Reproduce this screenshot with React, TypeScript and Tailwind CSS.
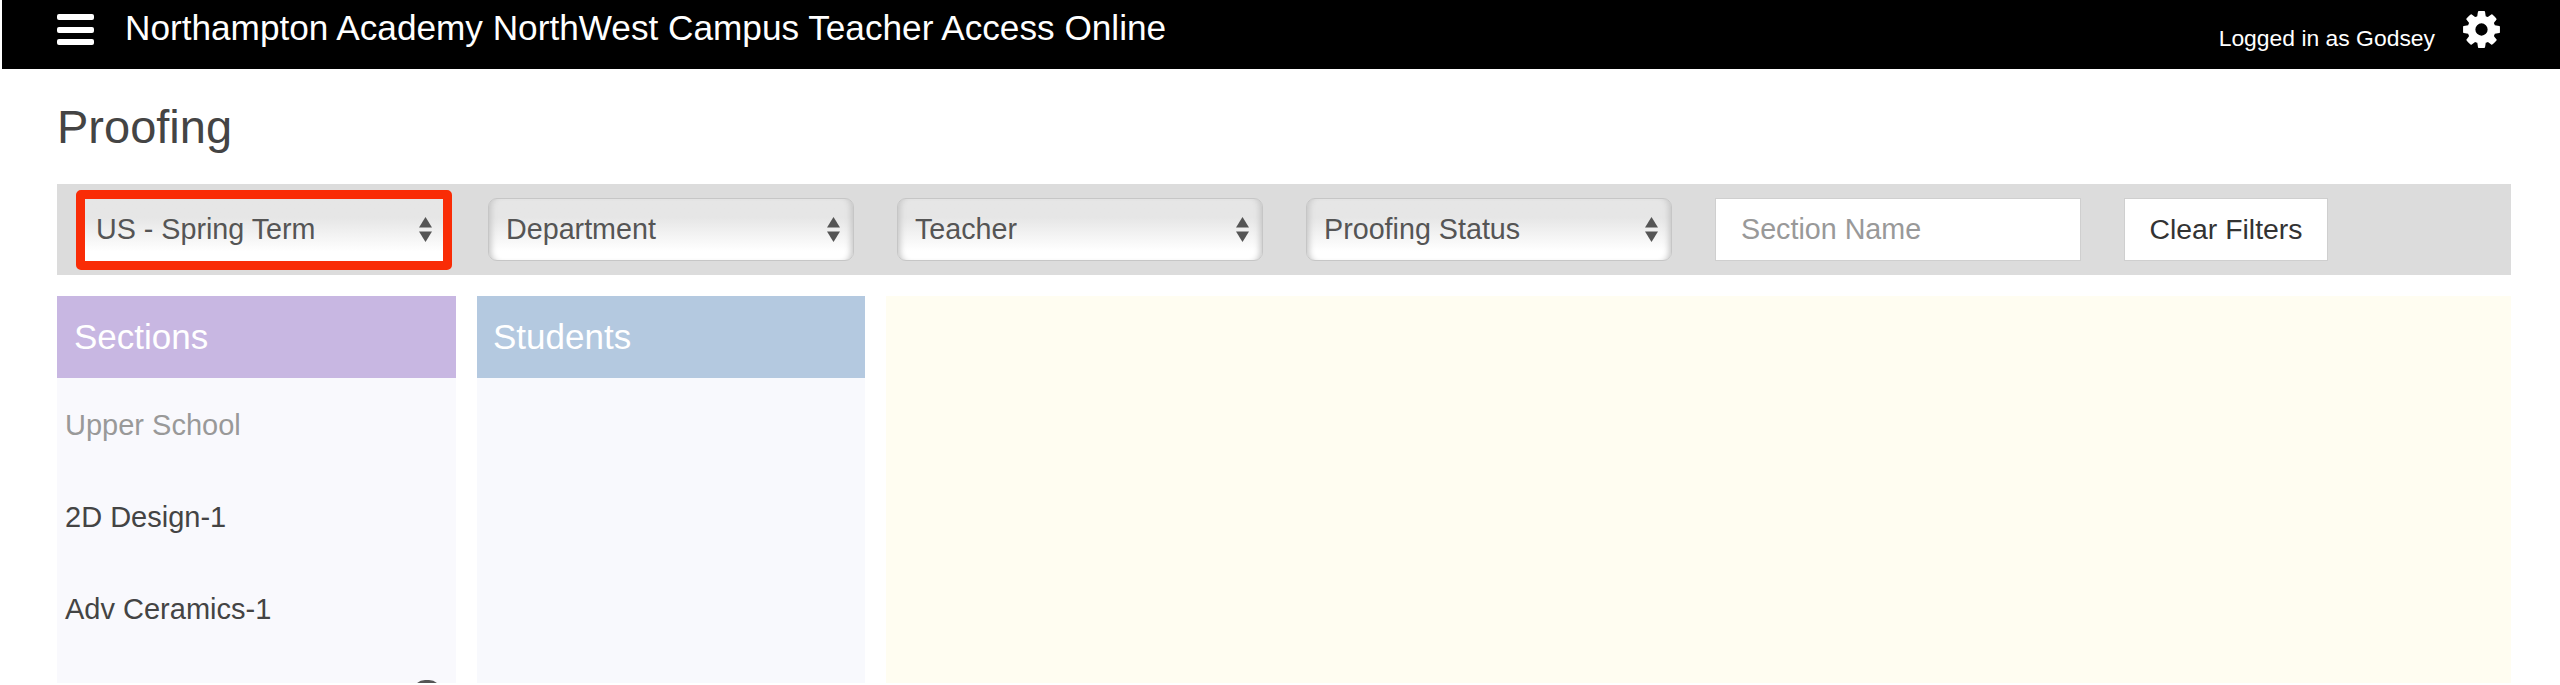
const font = 'font-["Liberation_Sans",Arial,sans-serif]'

function Arrows() {
  return (
    <svg width="13" height="25" viewBox="0 0 13 25" className="shrink-0" fill="#555">
      <path d="M6.5 0 13 10.5H0Z" />
      <path d="M0 14.5h13L6.5 25Z" />
    </svg>
  )
}

function Cog() {
  return (
    <svg viewBox="0 0 1792 1792" fill="currentColor" className="mb-[10px] ml-[25px] h-[43px] w-[43px]">
      <path d="M1152 896q0-106-75-181t-181-75-181 75-75 181 75 181 181 75 181-75 75-181zm512-109v222q0 12-8 23t-20 13l-185 28q-19 54-39 91 35 50 107 138 10 12 10 25t-9 23q-27 37-99 108t-94 71q-12 0-26-9l-138-108q-44 23-91 38-16 136-29 186-7 28-36 28h-222q-14 0-24.5-8.5t-11.5-21.5l-28-184q-49-16-90-37l-141 107q-10 9-25 9-14 0-25-11-126-114-165-168-7-10-7-23 0-12 8-23 15-21 51-66.5t54-70.5q-27-50-41-99l-183-27q-13-2-21-12.5t-8-23.5v-222q0-12 8-23t19-13l186-28q14-46 39-92-40-57-107-138-10-12-10-24 0-10 9-23 26-36 98.5-107.5t94.5-71.5q13 0 26 10l138 107q44-23 91-38 16-136 29-186 7-28 36-28h222q14 0 24.5 8.5t11.5 21.5l28 184q49 16 90 37l142-107q9-9 24-9 13 0 25 10 129 119 165 170 7 8 7 22 0 12-8 23-15 21-51 66.5t-54 70.5q26 50 41 98l183 28q13 2 21 12.5t8 23.5z" />
    </svg>
  )
}

function FilterSelect({ label }: { label: string }) {
  return (
    <div className="flex h-[63px] w-[366px] items-center justify-between rounded-[9px] border border-[#c6c6c6] bg-gradient-to-b from-[#e6e6e6] from-30% to-white to-85% pl-[17px] pr-[13px] text-[28.7px] text-[#555] shadow-[inset_7px_0_6px_-5px_#c4c4c4,inset_-7px_0_6px_-5px_#c4c4c4]">
      <span>{label}</span>
      <Arrows />
    </div>
  )
}

function Section({ label, muted }: { label: string; muted?: boolean }) {
  return (
    <li className={`flex h-[92px] items-center pl-[8px] pt-[4px] text-[29px] ${muted ? 'text-[#999]' : 'text-[#444]'}`}>
      {label}
    </li>
  )
}

export default function App() {
  return (
    <div className={`${font} flex h-[685px] w-full flex-col overflow-hidden bg-white`}>
      <header className="ml-[2px] flex h-[69px] shrink-0 items-center bg-black pl-[55px] pr-[57px] text-white">
        <div className="mb-[10px] flex h-[31px] w-[37px] flex-col justify-between">
          <span className="h-[6px] rounded-[2px] bg-white" />
          <span className="h-[6px] rounded-[2px] bg-white" />
          <span className="h-[6px] rounded-[2px] bg-white" />
        </div>
        <h1 className="mb-[12px] ml-[31px] text-[35.2px]">Northampton Academy NorthWest Campus Teacher Access Online</h1>
        <span className="ml-auto mt-[7px] text-[22.9px]">Logged in as Godsey</span>
        <Cog />
      </header>

      <main className="flex min-h-0 flex-1 flex-col pb-[2px] pl-[57px] pr-[49px]">
        <h2 className="flex h-[115px] shrink-0 items-center pt-[2px] text-[47px] text-[#444]">Proofing</h2>

        <div className="flex h-[91px] shrink-0 items-center gap-[43px] bg-[#dcdcdc] pl-[19px]">
          <div className="mr-[-7px] flex h-[80px] w-[376px] items-center justify-between rounded-[5px] border-[9px] border-[#f92c06] bg-gradient-to-b from-[#e6e6e6] from-30% to-white to-85% pl-[11px] pr-[11px] text-[28.7px] text-[#555]">
            <span>US - Spring Term</span>
            <Arrows />
          </div>
          <FilterSelect label="Department" />
          <FilterSelect label="Teacher" />
          <FilterSelect label="Proofing Status" />
          <input
            placeholder="Section Name"
            className="h-[63px] w-[366px] border border-[#cfcfcf] bg-white pl-[25px] text-[28.7px] placeholder:text-[#999]"
          />
          <button className="h-[63px] w-[204px] border border-[#cfcfcf] bg-white text-[28.4px] text-[#333]">
            Clear Filters
          </button>
        </div>

        <div className="mt-[21px] flex min-h-0 flex-1 gap-[21px]">
          <section className="flex w-[399px] flex-col overflow-hidden bg-[#f9f9fd]">
            <h3 className="flex h-[82px] shrink-0 items-center bg-[#c8b7e2] pl-[17px] text-[35px] text-white">Sections</h3>
            <ul>
              <Section label="Upper School" muted />
              <Section label="2D Design-1" />
              <Section label="Adv Ceramics-1" />
              <li className="flex justify-end pr-[15px] pt-[26px]">
                <span className="h-[24px] w-[28px] rounded-full bg-[#555]" />
              </li>
            </ul>
          </section>
          <section className="flex w-[388px] flex-col bg-[#f8f9fd]">
            <h3 className="flex h-[82px] shrink-0 items-center bg-[#b4c9e0] pl-[16px] text-[35px] text-white">Students</h3>
          </section>
          <section className="flex-1 bg-[#fffdf1]" />
        </div>
      </main>
    </div>
  )
}
